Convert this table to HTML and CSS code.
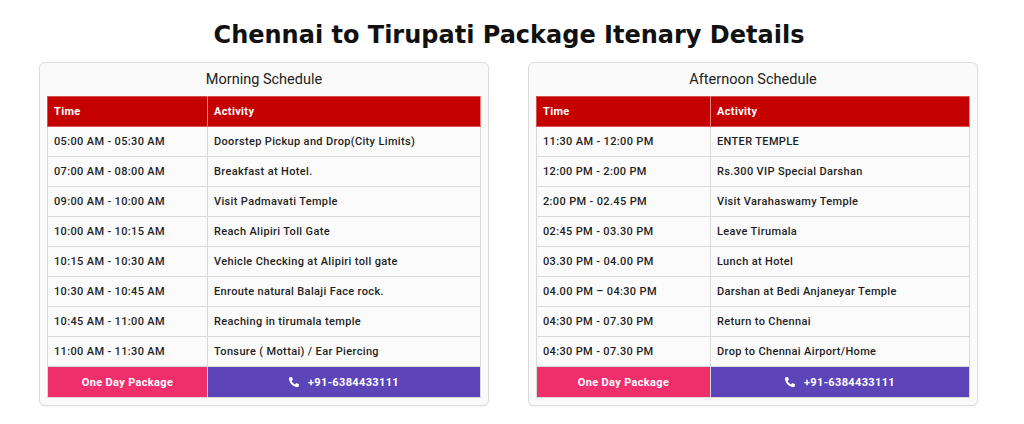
FILE: index.html
```html
<!DOCTYPE html>
<html lang="en">
<head>
<meta charset="utf-8">
<title>Chennai to Tirupati Package Itenary Details</title>
<link rel="stylesheet" href="styles.css">
</head>
<body>
<h1 class="title">Chennai to Tirupati Package Itenary Details</h1>
<div class="cards">
  <section class="card">
    <h2 class="card-title">Morning Schedule</h2>
    <table class="sched">
      <colgroup><col class="c-time-m"><col></colgroup>
      <thead><tr><th>Time</th><th>Activity</th></tr></thead>
      <tbody>
        <tr><td>05:00 AM - 05:30 AM</td><td>Doorstep Pickup and Drop(City Limits)</td></tr>
        <tr><td>07:00 AM - 08:00 AM</td><td>Breakfast at Hotel.</td></tr>
        <tr><td>09:00 AM - 10:00 AM</td><td>Visit Padmavati Temple</td></tr>
        <tr><td>10:00 AM - 10:15 AM</td><td>Reach Alipiri Toll Gate</td></tr>
        <tr><td>10:15 AM - 10:30 AM</td><td>Vehicle Checking at Alipiri toll gate</td></tr>
        <tr><td>10:30 AM - 10:45 AM</td><td>Enroute natural Balaji Face rock.</td></tr>
        <tr><td>10:45 AM - 11:00 AM</td><td>Reaching in tirumala temple</td></tr>
        <tr><td>11:00 AM - 11:30 AM</td><td>Tonsure ( Mottai) / Ear Piercing</td></tr>
      </tbody>
      <tfoot><tr><td class="pkg">One Day Package</td><td class="phone"><svg class="ph-icon" viewBox="0 0 512 512" width="10" height="10"><path fill="#fff" d="M497.4 361.8l-112-48a24 24 0 0 0-28 6.9l-49.6 60.6A370.7 370.7 0 0 1 130.6 204.1l60.6-49.6a23.9 23.9 0 0 0 6.9-28l-48-112A24.2 24.2 0 0 0 122.6.6l-104 24A24 24 0 0 0 0 48c0 256.5 207.9 464 464 464a24 24 0 0 0 23.4-18.6l24-104a24.3 24.3 0 0 0-14-27.6z"/></svg><span>+91-6384433111</span></td></tr></tfoot>
    </table>
  </section>
  <section class="card">
    <h2 class="card-title">Afternoon Schedule</h2>
    <table class="sched">
      <colgroup><col class="c-time-a"><col></colgroup>
      <thead><tr><th>Time</th><th>Activity</th></tr></thead>
      <tbody>
        <tr><td>11:30 AM - 12:00 PM</td><td>ENTER TEMPLE</td></tr>
        <tr><td>12:00 PM - 2:00 PM</td><td>Rs.300 VIP Special Darshan</td></tr>
        <tr><td>2:00 PM - 02.45 PM</td><td>Visit Varahaswamy Temple</td></tr>
        <tr><td>02:45 PM - 03.30 PM</td><td>Leave Tirumala</td></tr>
        <tr><td>03.30 PM - 04.00 PM</td><td>Lunch at Hotel</td></tr>
        <tr><td>04.00 PM – 04:30 PM</td><td>Darshan at Bedi Anjaneyar Temple</td></tr>
        <tr><td>04:30 PM - 07.30 PM</td><td>Return to Chennai</td></tr>
        <tr><td>04:30 PM - 07.30 PM</td><td>Drop to Chennai Airport/Home</td></tr>
      </tbody>
      <tfoot><tr><td class="pkg">One Day Package</td><td class="phone"><svg class="ph-icon" viewBox="0 0 512 512" width="10" height="10"><path fill="#fff" d="M497.4 361.8l-112-48a24 24 0 0 0-28 6.9l-49.6 60.6A370.7 370.7 0 0 1 130.6 204.1l60.6-49.6a23.9 23.9 0 0 0 6.9-28l-48-112A24.2 24.2 0 0 0 122.6.6l-104 24A24 24 0 0 0 0 48c0 256.5 207.9 464 464 464a24 24 0 0 0 23.4-18.6l24-104a24.3 24.3 0 0 0-14-27.6z"/></svg><span>+91-6384433111</span></td></tr></tfoot>
    </table>
  </section>
</div>
</body>
</html>
```
FILE: styles.css
```css
html, body {
  margin: 0;
  padding: 0;
  background: #ffffff;
}
body {
  width: 1024px;
  height: 424px;
  overflow: hidden;
  font-family: Roboto, "Liberation Sans", sans-serif;
  color: #222;
}
.title {
  margin: 0 6px 0 0;
  padding-top: 19px;
  height: 44px;
  box-sizing: border-box;
  text-align: center;
  font-family: "DejaVu Sans", "Liberation Sans", sans-serif;
  font-weight: 700;
  font-size: 24px;
  line-height: 32px;
  color: #111;
}
.cards {
  display: flex;
  gap: 39px;
  padding-left: 39px;
  margin-top: 18px;
}
.card {
  width: 450px;
  box-sizing: border-box;
  border: 1px solid #dcdcdc;
  border-radius: 6px;
  background: #fafafa;
  padding: 0 7px 7px;
  box-shadow: 0 1px 2px rgba(0,0,0,0.05);
}
.card-title {
  margin: 0;
  height: 33px;
  line-height: 33px;
  text-align: center;
  font-size: 14.5px;
  font-weight: 400;
  color: #222;
}
.sched {
  width: 100%;
  border-collapse: collapse;
  table-layout: fixed;
  font-size: 11px;
  letter-spacing: 0.35px;
}
.c-time-m { width: 160px; }
.c-time-a { width: 174px; }
.sched th {
  background: #c50000;
  color: #fff;
  text-align: left;
  font-weight: 700;
  height: 30px;
  padding: 0 0 0 6px;
  border: 1px solid #d9534f;
  border-right-color: #e88;
  box-sizing: border-box;
}
.sched tbody td {
  height: 30px;
  box-sizing: border-box;
  padding: 0 0 0 6px;
  border: 1px solid #dadada;
  background: #fbfbfb;
  color: #1e1e1e;
  font-weight: 500;
  vertical-align: middle;
}
.sched tfoot td {
  height: 31px;
  box-sizing: border-box;
  padding: 0;
  text-align: center;
  color: #fff;
  font-weight: 700;
  border: 1px solid #dadada;
}
.pkg {
  background: #ef2e6c;
}
.phone {
  background: #5d44b9;
}
.ph-icon {
  vertical-align: -1px;
  margin-right: 9px;
}
```
